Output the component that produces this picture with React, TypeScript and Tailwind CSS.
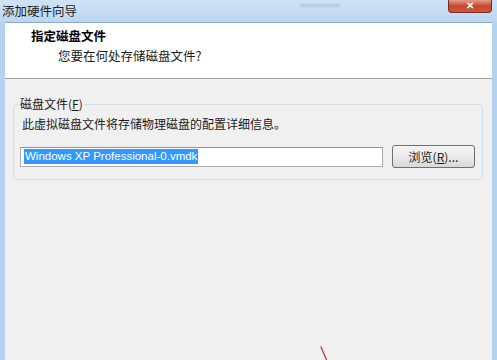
import React from 'react';

const cjk = { fontFamily: '"Noto Sans CJK SC", "Noto Sans", sans-serif' };
const latin = { fontFamily: '"Liberation Sans", "Noto Sans CJK SC", sans-serif' };

export default function App() {
  return (
    <div className="relative w-[497px] h-[360px] overflow-hidden bg-[#b4d3ef] flex flex-col" style={cjk}>
      {/* title bar */}
      <div className="relative h-[22px] shrink-0 bg-gradient-to-b from-[#cfe3f6] to-[#bcd7f0] flex items-center pl-[2px]">
        <span className="text-[12.5px] leading-none text-[#1e1e1e]">添加硬件向导</span>
        <div className="absolute left-[300px] top-[4px] w-[40px] h-[3px] rounded-full bg-[#8ea4bb] opacity-40 blur-[1px]" />
        <div className="absolute right-[5px] top-0 w-[44px] h-[13px] rounded-b-[4px] border border-t-0 border-[#7a2a20] bg-gradient-to-b from-[#e49a8a] via-[#c7452f] to-[#c85a3e] flex items-center justify-center">
          <span className="text-white text-[10px] leading-none font-bold" style={latin}>✕</span>
        </div>
      </div>

      {/* client area */}
      <div className="flex-1 ml-[5px] mr-[5px] flex flex-col bg-[#f0f0f0] border-t border-[#8ea9c4]">
        <div className="h-[56px] shrink-0 bg-white border-b border-[#a0a0a0] flex flex-col pt-[5px]">
          <div className="pl-[26px] text-[12.5px] leading-[16px] font-bold text-black">指定磁盘文件</div>
          <div className="pl-[53px] mt-[4px] text-[12.5px] leading-[16px] text-[#1a1a1a]">您要在何处存储磁盘文件?</div>
        </div>

        <div className="px-[8px] pt-[25px]">
          <div className="relative border border-[#d5dfe5] rounded-[3px] w-[470px] h-[76px] pl-[8px] pt-[11px]">
            <div className="absolute left-[5px] top-[-9px] bg-[#f0f0f0] px-[1px] text-[12px] leading-[16px] text-[#1a1a1a]">
              磁盘文件(<span className="underline">F</span>)
            </div>
            <div className="text-[12px] leading-[16px] text-[#1a1a1a]">此虚拟磁盘文件将存储物理磁盘的配置详细信息。</div>
            <div className="flex items-center gap-[9px] mt-[13px] -ml-[2px]">
              <div className="w-[363px] h-[20px] bg-white border border-[#abadb3] border-t-[#8e9399] flex items-center pl-[3px]">
                <span className="bg-[#3399ff] text-white text-[11.5px] leading-[15px] px-[1px]" style={latin}>
                  Windows XP Professional-0.vmdk
                </span>
              </div>
              <div className="w-[83px] h-[23px] rounded-[3px] border border-[#707070] bg-gradient-to-b from-[#f4f4f4] via-[#ebebeb] to-[#d8d8d8] flex items-center justify-center text-[12px] text-[#1a1a1a]">
                浏览(<span className="underline">R</span>)...
              </div>
            </div>
          </div>
        </div>
      </div>

      {/* pen stroke */}
      <svg className="absolute left-[316px] top-[342px]" width="16" height="20" viewBox="0 0 16 20">
        <line x1="5" y1="5" x2="11" y2="19" stroke="#f6cfd4" strokeWidth="3" strokeLinecap="round" />
        <line x1="5" y1="5" x2="11" y2="19" stroke="#6e3a48" strokeWidth="1" strokeLinecap="round" />
      </svg>
    </div>
  );
}
